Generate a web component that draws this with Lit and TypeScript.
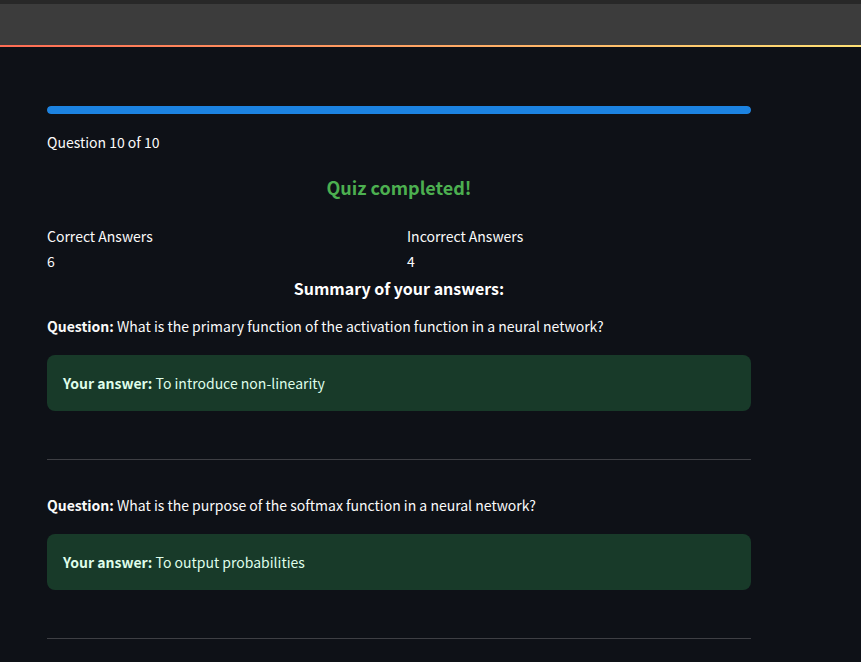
import { LitElement, html, css } from "lit";
import { customElement, property } from "lit/decorators.js";

@customElement("answer-card")
class AnswerCard extends LitElement {
  @property() question = "";
  @property() answer = "";

  static styles = css`
    :host { display: block; }
    p { margin: 0; }
    .question { line-height: 24px; }
    .answer {
      margin-top: 17px;
      padding: 16px;
      border-radius: 8px;
      background: #183a29;
      color: #dffde9;
      line-height: 24px;
    }
    .rule {
      margin: 48px 0 33px;
      border: 0;
      border-top: 1px solid #3e3f44;
    }
  `;

  render() {
    return html`
      <p class="question"><strong>Question:</strong> ${this.question}</p>
      <div class="answer" role="status"><p><strong>Your answer:</strong> ${this.answer}</p></div>
      <hr class="rule" />
    `;
  }
}

@customElement("app-root")
class AppRoot extends LitElement {
  private total = 10;
  private current = 10;
  private scores = [
    { label: "Correct Answers", value: 6 },
    { label: "Incorrect Answers", value: 4 },
  ];
  private answers = [
    {
      question: "What is the primary function of the activation function in a neural network?",
      answer: "To introduce non-linearity",
    },
    {
      question: "What is the purpose of the softmax function in a neural network?",
      answer: "To output probabilities",
    },
  ];

  static styles = css`
    :host {
      display: block;
      min-height: 100vh;
      max-height: 100vh;
      overflow: hidden;
      background: #0e1117;
      color: #fafafa;
      font: 14px/24px "Noto Sans CJK SC", "Noto Sans", sans-serif;
    }
    .toolbar {
      height: 41px;
      border-top: 4px solid #282828;
      background: #3c3c3c;
    }
    .decoration {
      height: 2px;
      background: linear-gradient(90deg, #ff6c54, #ffe175);
    }
    main { padding: 59px 110px 0 47px; }
    .track { height: 8px; border-radius: 4px; background: #262730; overflow: hidden; }
    .fill { height: 100%; border-radius: 4px; background: #1c83e1; }
    p, h1, h2, dl, dd { margin: 0; }
    .step { margin-top: 16px; }
    h1 {
      margin-top: 19px;
      color: #4caf50;
      font-size: 18px;
      line-height: 28px;
      text-align: center;
    }
    .scores {
      display: grid;
      grid-template-columns: 1fr 1fr;
      column-gap: 16px;
      margin-top: 23px;
      line-height: 25px;
    }
    h2 {
      margin-top: 1px;
      color: #ffffff;
      font-size: 16px;
      line-height: 26px;
      text-align: center;
    }
    .list { margin-top: 13px; }
  `;

  render() {
    return html`
      <header class="toolbar"></header>
      <div class="decoration"></div>
      <main>
        <div class="track" role="progressbar" aria-label="Quiz progress" aria-valuemin="0" aria-valuemax=${this.total} aria-valuenow=${this.current}>
          <div class="fill" style="width: ${(this.current / this.total) * 100}%"></div>
        </div>
        <p class="step">Question ${this.current} of ${this.total}</p>
        <h1>Quiz completed!</h1>
        <div class="scores">
          ${this.scores.map((s) => html`<dl><dt>${s.label}</dt><dd>${s.value}</dd></dl>`)}
        </div>
        <h2>Summary of your answers:</h2>
        <section class="list">
          ${this.answers.map((a) => html`<answer-card .question=${a.question} .answer=${a.answer}></answer-card>`)}
        </section>
      </main>
    `;
  }
}
